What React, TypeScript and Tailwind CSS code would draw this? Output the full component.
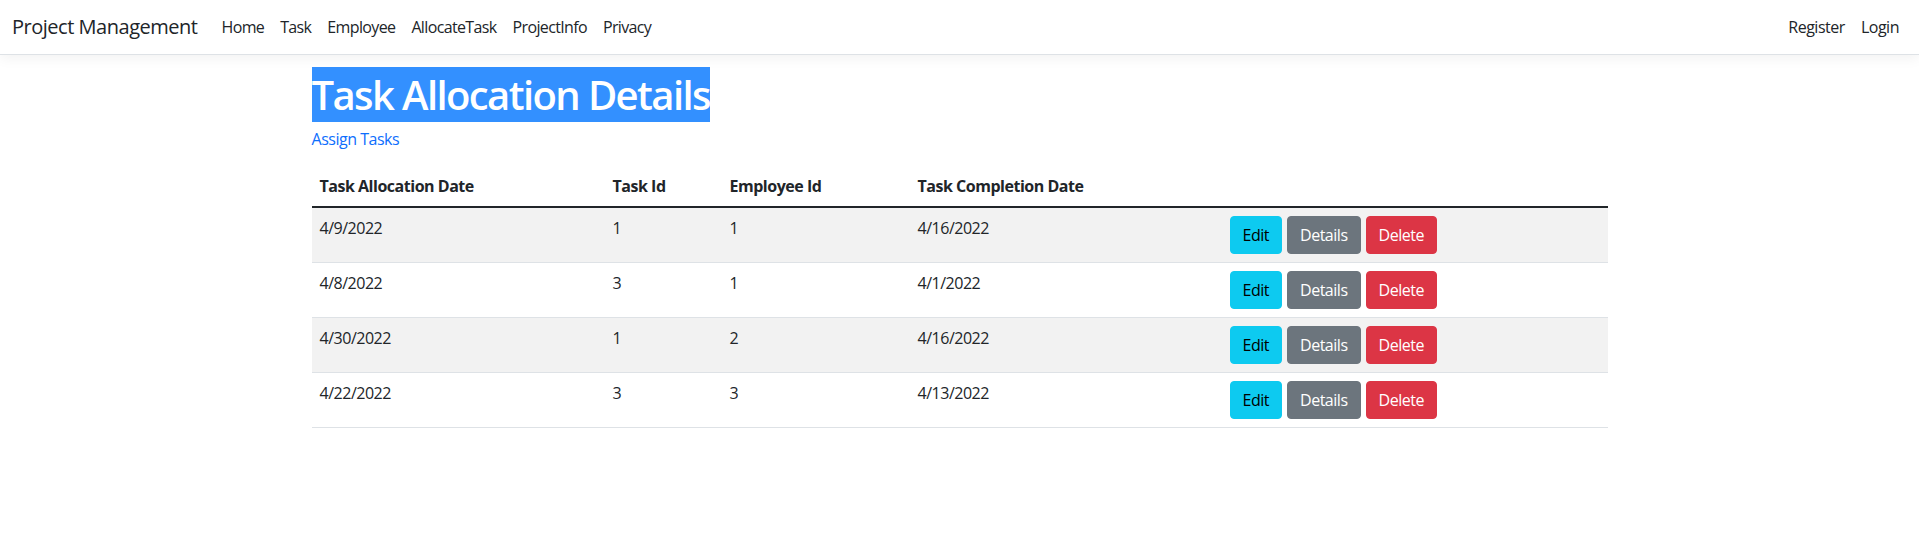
import React from 'react';

type Allocation = {
  allocated: string;
  taskId: number;
  employeeId: number;
  completion: string;
};

const rows: Allocation[] = [
  { allocated: '4/9/2022', taskId: 1, employeeId: 1, completion: '4/16/2022' },
  { allocated: '4/8/2022', taskId: 3, employeeId: 1, completion: '4/1/2022' },
  { allocated: '4/30/2022', taskId: 1, employeeId: 2, completion: '4/16/2022' },
  { allocated: '4/22/2022', taskId: 3, employeeId: 3, completion: '4/13/2022' },
];

const navLinks = ['Home', 'Task', 'Employee', 'AllocateTask', 'ProjectInfo', 'Privacy'];

const App: React.FC = () => {
  return (
    <div className="min-h-[544px] bg-white text-[#212529] font-['Open_Sans',sans-serif] text-base tracking-[-0.03em]">
      <header className="h-[55px] border-b border-[#dee2e6] bg-white shadow-[0_4px_12px_rgba(0,0,0,0.05)] mb-4">
        <nav className="h-full flex items-center justify-between px-3">
          <div className="flex items-center">
            <a href="/" className="text-[20px] leading-[30px] mr-4 text-[#212529]">
              Project Management
            </a>
            <ul className="flex">
              {navLinks.map((link) => (
                <li key={link}>
                  <a href="#" className="block px-2 py-2 leading-6 text-[#212529] tracking-[-0.04em]">
                    {link}
                  </a>
                </li>
              ))}
            </ul>
          </div>
          <ul className="flex">
            <li>
              <a href="#" className="block px-2 py-2 leading-6 text-[#212529]">Register</a>
            </li>
            <li>
              <a href="#" className="block px-2 py-2 leading-6 text-[#212529]">Login</a>
            </li>
          </ul>
        </nav>
      </header>

      <main className="max-w-[1320px] mx-auto px-3">
        <h1 className="text-[40px] leading-[48px] font-semibold mb-2 tracking-[-0.04em]">
          <span className="bg-[#3390ff] text-white">Task Allocation Details</span>
        </h1>
        <p className="mb-[15px] leading-6">
          <a href="#" className="text-[#0d6efd]">Assign Tasks</a>
        </p>

        <table className="w-full border-separate border-spacing-0 text-left">
          <thead>
            <tr>
              <th className="w-[293px] px-2 py-2 leading-6 font-bold border-b-2 border-[#212529]">Task Allocation Date</th>
              <th className="w-[117px] px-2 py-2 leading-6 font-bold border-b-2 border-[#212529]">Task Id</th>
              <th className="w-[188px] px-2 py-2 leading-6 font-bold border-b-2 border-[#212529]">Employee Id</th>
              <th className="w-[312px] px-2 py-2 leading-6 font-bold border-b-2 border-[#212529]">Task Completion Date</th>
              <th className="px-2 py-2 border-b-2 border-[#212529]"></th>
            </tr>
          </thead>
          <tbody>
            {rows.map((row, i) => (
              <tr key={i} className={i % 2 === 0 ? 'bg-[#f2f2f2]' : 'bg-white'}>
                <td className="p-2 align-top leading-6 border-b border-[#dee2e6]">{row.allocated}</td>
                <td className="p-2 align-top leading-6 border-b border-[#dee2e6]">{row.taskId}</td>
                <td className="p-2 align-top leading-6 border-b border-[#dee2e6]">{row.employeeId}</td>
                <td className="p-2 align-top leading-6 border-b border-[#dee2e6]">{row.completion}</td>
                <td className="p-2 align-top border-b border-[#dee2e6]">
                  <div className="flex gap-[5px]">
                    <a href="#" className="h-[38px] px-3 leading-[36px] border border-[#0dcaf0] bg-[#0dcaf0] text-black rounded">Edit</a>
                    <a href="#" className="h-[38px] px-3 leading-[36px] border border-[#6c757d] bg-[#6c757d] text-white rounded">Details</a>
                    <a href="#" className="h-[38px] px-3 leading-[36px] border border-[#dc3545] bg-[#dc3545] text-white rounded">Delete</a>
                  </div>
                </td>
              </tr>
            ))}
          </tbody>
        </table>
      </main>
    </div>
  );
};

export default App;
